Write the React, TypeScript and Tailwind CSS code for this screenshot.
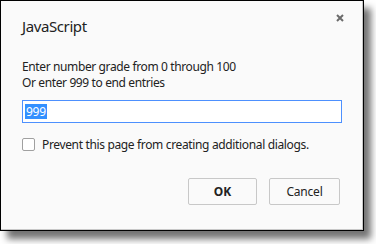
import React from "react";

export default function App() {
  return (
    <div className="w-[376px] h-[244px] bg-white overflow-hidden" style={{ fontFamily: '"Noto Sans", "Segoe UI", sans-serif' }}>
      <div className="w-[364px] h-[231px] border border-black bg-[#fafafa] shadow-[7px_8px_7px_rgba(0,0,0,0.55)]">
        <div className="w-full h-full border border-[#c8c8c8] border-t-0 border-l-0 flex flex-col px-[21px] text-[#333]">
          <div className="flex justify-between items-start mt-[15px] h-[20px]">
            <div className="text-[15px] leading-[20px] tracking-[-0.4px] text-[#222]">JavaScript</div>
            <svg width="8" height="8" viewBox="0 0 8 8" className="mt-[-2px] mr-[-3px]">
              <path d="M1 1 L7 7 M7 1 L1 7" stroke="#6b6b6b" strokeWidth="2" />
            </svg>
          </div>
          <div className="mt-[23px] text-[12px] leading-[16px] tracking-[-0.38px] text-[#222]">
            <div>Enter number grade from 0 through 100</div>
            <div>Or enter 999 to end entries</div>
          </div>
          <div className="mt-[9px] w-[320px] h-[23px] border border-[#4d90fe] bg-white flex items-center pl-[2px]">
            <span className="bg-[#3390ff] text-white text-[12px] leading-[15px] px-[1px] tracking-[-0.3px]">999</span>
          </div>
          <div className="mt-[15px] flex items-center gap-[7px] h-[13px]">
            <div className="w-[13px] h-[13px] border border-[#a0a0a0] rounded-[2px] bg-white" />
            <div className="text-[12px] leading-[15px] tracking-[-0.35px] text-[#222]">Prevent this page from creating additional dialogs.</div>
          </div>
          <div className="mt-[27px] flex justify-end gap-[12px] pr-[1px]">
            <button className="w-[69px] h-[27px] border border-[#c8c8c8] rounded-[2px] bg-[#fafafa] text-[12px] font-bold text-[#222]">OK</button>
            <button className="w-[71px] h-[27px] border border-[#c8c8c8] rounded-[2px] bg-[#fafafa] text-[12px] tracking-[-0.2px] text-[#222]">Cancel</button>
          </div>
        </div>
      </div>
    </div>
  );
}
